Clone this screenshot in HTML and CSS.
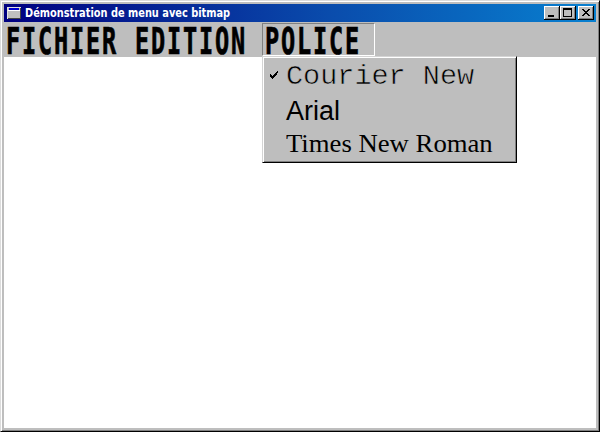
FILE: index.html
```
<!DOCTYPE html>
<html lang="fr">
<head>
<meta charset="utf-8">
<title>Démonstration de menu avec bitmap</title>
<link rel="stylesheet" href="styles.css">
</head>
<body>
<div class="window">
  <header class="titlebar">
    <svg class="app-icon" width="14" height="12" shape-rendering="crispEdges"><path fill="#e0e0e0" d="M0 0h14v12H0z"/><path fill="#444" d="M1 11h13v1H1zM13 1h1v11h-1z"/><path fill="#c0c0c0" d="M1 1h12v10H1z"/><path fill="#0000d0" d="M2 1h10v2H2z"/><path fill="#fff" d="M1 3h12v1H1z"/></svg>
    <h1 class="title"><span>Démonstration de menu avec bitmap</span></h1>
    <div class="controls">
      <button class="control" aria-label="Réduire"><svg width="16" height="14" shape-rendering="crispEdges"><path d="M4 9h6v2H4z"/></svg></button>
      <button class="control" aria-label="Agrandir"><svg width="16" height="14" shape-rendering="crispEdges"><path fill-rule="evenodd" d="M3 2h9v9H3zM4 4v6h7V4z"/></svg></button>
      <button class="control close" aria-label="Fermer"><svg width="16" height="14" shape-rendering="crispEdges"><path d="M4 3h2v1H4zM10 3h2v1h-2zM5 4h2v1H5zM9 4h2v1H9zM6 5h4v1H6zM7 6h2v1H7zM6 7h4v1H6zM5 8h2v1H5zM9 8h2v1H9zM4 9h2v1H4zM10 9h2v1h-2z"/></svg></button>
    </div>
  </header>
  <nav class="menubar">
    <div class="menu"><span class="label">FICHIER</span></div>
    <div class="menu"><span class="label">EDITION</span></div>
    <div class="menu open"><span class="label">POLICE</span>
      <ul class="dropdown">
        <li class="item courier"><svg class="check" width="8" height="8" shape-rendering="crispEdges"><path d="M0 3h1v3H0zM1 4h1v3H1zM2 5h1v3H2zM3 4h1v3H3zM4 3h1v3H4zM5 2h1v3H5zM6 1h1v3H6zM7 0h1v2H7z"/></svg><span class="name">Courier New</span></li>
        <li class="item arial"><span class="name">Arial</span></li>
        <li class="item times"><span class="name">Times New Roman</span></li>
      </ul>
    </div>
  </nav>
  <main class="client"></main>
</div>
</body>
</html>
```
FILE: styles.css
```
* { box-sizing: border-box; }
body { margin: 0; background: #bebebe; overflow: hidden; }
.window {
  width: 600px; height: 432px; padding: 3px;
  display: flex; flex-direction: column;
  background: #bebebe;
  border: 1px solid; border-color: #dcdcdc #000 #000 #dcdcdc;
  box-shadow: inset 1px 1px #fff, inset -1px -1px #808080;
}
.titlebar {
  height: 18px; flex: none; display: flex; align-items: center;
  padding: 0 2px 0 3px;
  background: linear-gradient(90deg, #000080, #0a4cac 55%, #0880d0);
}
.app-icon { flex: none; }
.title {
  flex: 1; margin: 0 0 0 4px; color: #fff; white-space: nowrap;
  font: bold 11.5px/18px "DejaVu Sans", sans-serif;
}
.title span { display: inline-block; transform: scaleX(.853); transform-origin: 0 0; }
.controls { display: flex; }
.control {
  width: 16px; height: 14px; padding: 0; border: 0; display: block;
  background: #bebebe;
  box-shadow: inset -1px -1px #000, inset 1px 1px #fff, inset -2px -2px #808080;
}
.control svg { display: block; }
.close { margin-left: 2px; }
.menubar { height: 35px; flex: none; display: flex; padding-top: 1px; }
.menu { width: 129px; height: 33px; padding: 3px 0 0 2px; }
.menu.open {
  position: relative; width: 113px; padding: 2px 0 0 2px;
  border: 1px solid; border-color: #808080 #fff #fff #808080;
}
.label {
  display: block; width: 0; white-space: nowrap; color: #000;
  font: bold 38px/30px "DejaVu Sans Mono", monospace;
  letter-spacing: 2.93px;
  -webkit-text-stroke: .7px #000;
  transform: scaleX(.62); transform-origin: 0 0;
}
.dropdown {
  position: absolute; left: -1px; top: 32px; z-index: 1;
  width: 255px; height: 107px; margin: 0; padding: 3px; list-style: none;
  background: #bebebe;
  border: 1px solid; border-color: #d4d4d4 #000 #000 #d4d4d4;
  box-shadow: inset 1px 1px #fff, inset -1px -1px #808080;
}
.item { display: flex; height: 33px; padding-left: 20px; white-space: nowrap; color: #000; }
.check { flex: none; margin: 11px 8px 0 -16px; }
.name { display: block; transform-origin: 0 0; }
.courier { font: 28.5px/33px "Liberation Mono", monospace; }
.courier .name { -webkit-text-stroke: .6px #bebebe; }
.arial { height: 35px; font: 27px/36px "Liberation Sans", sans-serif; }
.times { font: 26px/31px "Liberation Serif", serif; }
.times .name { transform: scaleX(1.027); }
.client { flex: 1; background: #fff; }
```
